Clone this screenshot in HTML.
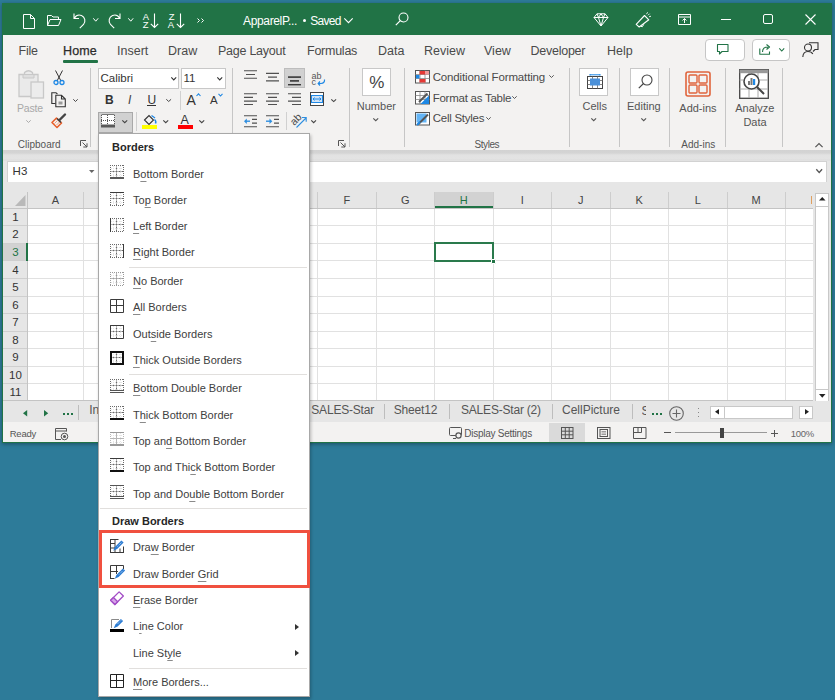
<!DOCTYPE html>
<html><head><meta charset="utf-8">
<style>
*{margin:0;padding:0;box-sizing:border-box}
html,body{width:835px;height:700px;overflow:hidden;background:#2d7b99;font-family:"Liberation Sans",sans-serif;position:relative}
.a{position:absolute}
.t{position:absolute;white-space:nowrap;line-height:1}
svg{position:absolute;overflow:visible}
.w{color:#fff}
.tab{position:absolute;white-space:nowrap;line-height:1;font-size:12.5px;color:#444}
.g{position:absolute;white-space:nowrap;line-height:1;font-size:10px;color:#555}
.rl{position:absolute;white-space:nowrap;line-height:1;font-size:11px;color:#444}
.vs{position:absolute;width:1px;background:#c4c4c4}
.ch{position:absolute;white-space:nowrap;line-height:1;font-size:11px;color:#444;text-align:center}
#menu{left:98px;top:133px;width:212px;height:564px;background:#fff;border:1px solid #a8a8a8;box-shadow:1px 2px 3px rgba(0,0,0,.25)}
.mi u{text-decoration:underline;text-underline-offset:2.5px;text-decoration-thickness:1px;text-decoration-color:#8a8a8a}
.mi{position:absolute;left:34px;font-size:11px;color:#404040;white-space:nowrap;line-height:1}
.mh{position:absolute;left:13px;font-size:11px;font-weight:bold;color:#262626;white-space:nowrap;line-height:1}
.sep{position:absolute;right:2px;height:1px;background:#e1dfdd}
.ic{position:absolute;left:11px}
</style></head>
<body>
<!-- window -->
<div class="a" style="left:2px;top:3px;width:830px;height:440px;background:#217346;box-shadow:0 1px 4px rgba(0,0,0,.35)"></div>
<svg style="left:23px;top:14px" width="12" height="15" viewBox="0 0 12 15"><path d="M.5 .5H7.5L11.5 4.5V14.5H.5Z M7.5 .5V4.5H11.5" fill="none" stroke="#fff" stroke-width="1"/></svg>
<svg style="left:46px;top:14px" width="16" height="13" viewBox="0 0 16 13"><path d="M1.5 11.5V1.5H5.5L7 3H12.5V5.5 M1.5 11.5L4 5.5H15L12.5 11.5Z" fill="none" stroke="#fff" stroke-width="1" stroke-linejoin="round"/></svg>
<svg style="left:72px;top:11.8px" width="15" height="17" viewBox="0 0 15 17"><path d="M2 1.5V6.5H7 M2.5 6C4 3.5 7 2.5 9.5 3.5C13 5 14 9.5 11.5 12.5L7.8 16.2" fill="none" stroke="#fff" stroke-width="1.1"/></svg>
<svg style="left:92.5px;top:18px" width="5.5" height="3.5" viewBox="0 0 5.5 3.5"><path d="M0.3 0.3L2.75 3.2L5.2 0.3" fill="none" stroke="#fff" stroke-width="1"/></svg>
<svg style="left:107.3px;top:11.8px" width="15" height="17" viewBox="0 0 15 17"><path d="M13 1.5V6.5H8 M12.5 6C11 3.5 8 2.5 5.5 3.5C2 5 1 9.5 3.5 12.5L7.2 16.2" fill="none" stroke="#fff" stroke-width="1.1"/></svg>
<svg style="left:127.8px;top:18px" width="5.5" height="3.5" viewBox="0 0 5.5 3.5"><path d="M0.3 0.3L2.75 3.2L5.2 0.3" fill="none" stroke="#fff" stroke-width="1"/></svg>
<div class="t" style="left:142.6px;top:13.0px;font-size:8.6px;color:#fff;transform:scaleX(1.1)">A</div>
<div class="t" style="left:143.0px;top:21.4px;font-size:8.6px;color:#fff;transform:scaleX(1.1)">Z</div>
<svg style="left:150px;top:13px" width="9" height="16" viewBox="0 0 9 16"><path d="M4.5 0.5V14.5M0.8 10.8L4.5 14.5L8.2 10.8" fill="none" stroke="#fff" stroke-width="1.1"/></svg>
<div class="t" style="left:168.6px;top:13.0px;font-size:8.6px;color:#fff;transform:scaleX(1.1)">Z</div>
<div class="t" style="left:168.4px;top:21.4px;font-size:8.6px;color:#fff;transform:scaleX(1.1)">A</div>
<svg style="left:175.5px;top:13px" width="9" height="16" viewBox="0 0 9 16"><path d="M4.5 0.5V14.5M0.8 10.8L4.5 14.5L8.2 10.8" fill="none" stroke="#fff" stroke-width="1.1"/></svg>
<svg style="left:197px;top:18px" width="8" height="5" viewBox="0 0 8 5"><path d="M.5 .5L2.5 2.5L.5 4.5M4.5 .5L6.5 2.5L4.5 4.5" fill="none" stroke="#fff" stroke-width="1"/></svg>
<div class="t" style="left:243.0px;top:15.3px;font-size:12px;color:#fff;letter-spacing:-0.35px">ApparelP...</div>
<div class="a" style="left:302.5px;top:19px;width:3px;height:3px;background:#fff;border-radius:50%"></div>
<div class="t" style="left:310.2px;top:15.3px;font-size:12px;color:#fff;letter-spacing:-0.7px">Saved</div>
<svg style="left:344px;top:18px" width="9" height="5" viewBox="0 0 9 5"><path d="M0.3 0.3L4.5 4.7L8.7 0.3" fill="none" stroke="#fff" stroke-width="1.1"/></svg>
<svg style="left:395px;top:12px" width="14" height="14" viewBox="0 0 14 14"><circle cx="8.5" cy="5.5" r="4.5" fill="none" stroke="#fff" stroke-width="1.1"/><path d="M5.3 8.7L0.8 13.2" stroke="#fff" stroke-width="1.2"/></svg>
<svg style="left:593px;top:13px" width="16" height="14" viewBox="0 0 16 14"><path d="M4 .8H12L15 4.5L8 13L1 4.5Z M1 4.5H15 M5.5 4.5L8 13L10.5 4.5 M4 .8L5.5 4.5L8 .8L10.5 4.5L12 .8" fill="none" stroke="#fff" stroke-width="1" stroke-linejoin="round"/></svg>
<svg style="left:635px;top:12px" width="17" height="16" viewBox="0 0 17 16"><path d="M1.2 12.3L9.5 3.5L13.8 7.8L4.2 15Z" fill="none" stroke="#fff" stroke-width="1.1" stroke-linejoin="round"/><path d="M5.5 14.2Q7.5 16.2 8.8 12.3" fill="none" stroke="#fff" stroke-width="1"/><path d="M11.5 2.2L12.6 .3M14 4.8L16 4.2M13 3.3L14.6 1.7" stroke="#fff" stroke-width="0.9"/></svg>
<svg style="left:677.5px;top:14px" width="13" height="11" viewBox="0 0 13 11"><path d="M.5 .5H12.5V10.5H.5Z M.5 3H12.5 M6.5 9V4.5 M4.5 6.5L6.5 4.5L8.5 6.5" fill="none" stroke="#fff" stroke-width="1"/></svg>
<div class="a" style="left:721px;top:19px;width:10px;height:1px;background:#fff"></div>
<svg style="left:763px;top:14px" width="10" height="10" viewBox="0 0 10 10"><rect x=".5" y=".5" width="9" height="9" rx="1.5" fill="none" stroke="#fff" stroke-width="1"/></svg>
<svg style="left:804.5px;top:14px" width="11" height="11" viewBox="0 0 11 11"><path d="M.5 .5L10.5 10.5M10.5 .5L.5 10.5" stroke="#fff" stroke-width="1.1"/></svg>
<div class="a" style="left:3px;top:35px;width:828px;height:115px;background:#f3f2f1"></div>
<div class="t" style="left:18.5px;top:44.6px;font-size:12.5px;color:#4a4a4a;letter-spacing:-0.25px">File</div>
<div class="t" style="left:117.0px;top:44.6px;font-size:12.5px;color:#4a4a4a">Insert</div>
<div class="t" style="left:168.0px;top:44.6px;font-size:12.5px;color:#4a4a4a">Draw</div>
<div class="t" style="left:218.0px;top:44.6px;font-size:12.5px;color:#4a4a4a;letter-spacing:-0.25px">Page Layout</div>
<div class="t" style="left:307.0px;top:44.6px;font-size:12.5px;color:#4a4a4a;letter-spacing:-0.25px">Formulas</div>
<div class="t" style="left:378.0px;top:44.6px;font-size:12.5px;color:#4a4a4a">Data</div>
<div class="t" style="left:424.0px;top:44.6px;font-size:12.5px;color:#4a4a4a">Review</div>
<div class="t" style="left:484.0px;top:44.6px;font-size:12.5px;color:#4a4a4a">View</div>
<div class="t" style="left:530.5px;top:44.6px;font-size:12.5px;color:#4a4a4a;letter-spacing:-0.25px">Developer</div>
<div class="t" style="left:607.0px;top:44.6px;font-size:12.5px;color:#4a4a4a">Help</div>
<div class="t" style="left:63.0px;top:44.6px;font-size:12.5px;color:#2b2b2b;letter-spacing:0.1px;-webkit-text-stroke:0.25px #2b2b2b">Home</div>
<div class="a" style="left:63px;top:60px;width:35px;height:3px;background:#217346;border-radius:1px"></div>
<div class="a" style="left:704.5px;top:38.5px;width:40px;height:22px;border:1px solid #c6c6c6;border-radius:4px;background:#fff"></div>
<svg style="left:716.5px;top:43.5px" width="12" height="11" viewBox="0 0 12 11"><path d="M.5 .5H11V7.5H5L2.5 10V7.5H.5Z" fill="none" stroke="#217346" stroke-width="1.1" stroke-linejoin="round"/></svg>
<div class="a" style="left:752px;top:38.5px;width:37.5px;height:22px;border:1px solid #c6c6c6;border-radius:4px;background:#fff"></div>
<svg style="left:758.5px;top:43px" width="13" height="12" viewBox="0 0 13 12"><path d="M.8 5.5V11.2H10.5V8.5 M3.5 9C3.5 5.5 5.5 4 9 4 M7.5 1.5L10.5 4L7.5 6.5" fill="none" stroke="#217346" stroke-width="1.1" stroke-linejoin="round"/></svg>
<svg style="left:779px;top:47.5px" width="5.5" height="3.3" viewBox="0 0 5.5 3.3"><path d="M0.3 0.3L2.75 3.0L5.2 0.3" fill="none" stroke="#217346" stroke-width="1.1"/></svg>
<svg style="left:801.5px;top:42px" width="17" height="16" viewBox="0 0 17 16"><circle cx="6" cy="5.5" r="3.5" fill="none" stroke="#333" stroke-width="1.1"/><path d="M.8 15C1 11 3 9.5 6 9.5C8.5 9.5 10 10.5 10.8 12 M7 .8H16V7.5H13L11 9.5" fill="none" stroke="#333" stroke-width="1.1"/></svg>
<div class="a" style="left:90px;top:68px;width:1px;height:79px;background:#c6c6c6"></div>
<div class="a" style="left:232px;top:68px;width:1px;height:79px;background:#c6c6c6"></div>
<div class="a" style="left:349px;top:68px;width:1px;height:79px;background:#c6c6c6"></div>
<div class="a" style="left:404px;top:68px;width:1px;height:79px;background:#c6c6c6"></div>
<div class="a" style="left:569px;top:68px;width:1px;height:79px;background:#c6c6c6"></div>
<div class="a" style="left:619px;top:68px;width:1px;height:79px;background:#c6c6c6"></div>
<div class="a" style="left:669px;top:68px;width:1px;height:79px;background:#c6c6c6"></div>
<div class="a" style="left:725px;top:68px;width:1px;height:79px;background:#c6c6c6"></div>
<div class="a" style="left:782px;top:68px;width:1px;height:79px;background:#c6c6c6"></div>
<svg style="left:18px;top:70px" width="27" height="29" viewBox="0 0 27 29"><path d="M1 4.5H6.5V2.5Q10.5 -1 14.5 2.5V4.5H20V26.5H1Z" fill="#eaeaea" stroke="#c8c8c8" stroke-width="1.3"/><path d="M5 4.5H16V8H5Z" fill="#dedede" stroke="#c8c8c8" stroke-width="1"/><rect x="13" y="12" width="12.5" height="16" fill="#ececec" stroke="#c8c8c8" stroke-width="1.3"/></svg>
<div class="t" style="left:17.0px;top:103.3px;font-size:10.5px;color:#a8a8a8;letter-spacing:-0.2px">Paste</div>
<svg style="left:26.2px;top:119.8px" width="5" height="2.8" viewBox="0 0 5 2.8"><path d="M0.3 0.3L2.5 2.5L4.7 0.3" fill="none" stroke="#aaa" stroke-width="1"/></svg>
<svg style="left:53px;top:70px" width="12" height="16" viewBox="0 0 12 16"><path d="M2.5 .5L8 11M9.5 .5L4 11" stroke="#333" stroke-width="1"/><circle cx="3" cy="12.5" r="2" fill="none" stroke="#1e88e5" stroke-width="1.3"/><circle cx="9" cy="12.5" r="2" fill="none" stroke="#1e88e5" stroke-width="1.3"/></svg>
<svg style="left:51px;top:92px" width="16" height="16" viewBox="0 0 16 16"><path d="M4.5 11.5H.8V.8H5L6.5 2.2" fill="none" stroke="#333" stroke-width="1.1"/><path d="M4.8 3.3H10.5L14.3 7V14.7H4.8Z M10.5 3.3V7H14.3" fill="none" stroke="#333" stroke-width="1.1"/><rect x="7.5" y="9.5" width="4" height="3" fill="#9a9a9a"/></svg>
<svg style="left:72.5px;top:98.6px" width="5" height="2.8" viewBox="0 0 5 2.8"><path d="M0.3 0.3L2.5 2.5L4.7 0.3" fill="none" stroke="#444" stroke-width="1"/></svg>
<svg style="left:51px;top:113px" width="16" height="15" viewBox="0 0 16 15"><path d="M1 9.5L5.5 5L10.5 10L6 14.5Z" fill="#f3f2f1" stroke="#e8602c" stroke-width="1.6" stroke-linejoin="round"/><path d="M3.5 10.5L6.5 7.5M5.5 12L8.5 9" stroke="#f4a27e" stroke-width="1"/><path d="M6 5.5L10 9.5" stroke="#444" stroke-width="1.6"/><path d="M8.5 7L14 1.5" stroke="#444" stroke-width="2.4" stroke-linecap="round"/></svg>
<div class="t" style="left:17.8px;top:140.2px;font-size:10px;color:#555">Clipboard</div>
<svg style="left:79.5px;top:140px" width="8" height="8" viewBox="0 0 8 8"><path d="M.5 6V.5H6M2.5 2.5L7 7M7 3.3V7H3.3" fill="none" stroke="#555" stroke-width="1"/></svg>
<div class="a" style="left:98px;top:67.5px;width:80.5px;height:21px;background:#fff;border:1px solid #c8c8c8"></div>
<div class="t" style="left:100.5px;top:73.2px;font-size:11.5px;color:#333">Calibri</div>
<svg style="left:170.5px;top:77.3px" width="5.5" height="3.2" viewBox="0 0 5.5 3.2"><path d="M0.3 0.3L2.75 2.9000000000000004L5.2 0.3" fill="none" stroke="#333" stroke-width="1.1"/></svg>
<div class="a" style="left:180.5px;top:67.5px;width:45px;height:21px;background:#fff;border:1px solid #c8c8c8"></div>
<div class="t" style="left:183.5px;top:73.2px;font-size:11.5px;color:#333">11</div>
<svg style="left:217.2px;top:77.3px" width="5.5" height="3.2" viewBox="0 0 5.5 3.2"><path d="M0.3 0.3L2.75 2.9000000000000004L5.2 0.3" fill="none" stroke="#333" stroke-width="1.1"/></svg>
<div class="t" style="left:105.0px;top:93.5px;font-size:12px;color:#333;font-weight:bold">B</div>
<div class="t" style="left:128.0px;top:93.5px;font-size:12px;color:#444;font-style:italic">I</div>
<div class="t" style="left:147.5px;top:93.5px;font-size:12px;color:#333">U</div>
<div class="a" style="left:147px;top:105px;width:9px;height:1px;background:#333"></div>
<svg style="left:165.8px;top:98.8px" width="5.4" height="2.8" viewBox="0 0 5.4 2.8"><path d="M0.3 0.3L2.7 2.5L5.1000000000000005 0.3" fill="none" stroke="#444" stroke-width="1"/></svg>
<div class="a" style="left:180px;top:91px;width:1px;height:19px;background:#d0d0d0"></div>
<div class="t" style="left:186.5px;top:93.0px;font-size:14px;color:#333">A</div>
<svg style="left:196px;top:93px" width="5" height="3.5" viewBox="0 0 5 3.5"><path d="M.5 3L2.5 .8L4.5 3" fill="none" stroke="#1e88e5" stroke-width="1.1"/></svg>
<div class="t" style="left:210.0px;top:95.2px;font-size:11.5px;color:#333">A</div>
<svg style="left:218.4px;top:92.8px" width="5" height="3.5" viewBox="0 0 5 3.5"><path d="M.5 .8L2.5 3L4.5 .8" fill="none" stroke="#1e88e5" stroke-width="1.1"/></svg>
<div class="a" style="left:98px;top:111.5px;width:35px;height:21px;background:#d1d1d1;border:1px solid #a9a9a9"></div>
<svg style="left:101px;top:114px" width="14" height="14" viewBox="0 0 14 14"><rect x=".5" y=".5" width="13" height="12" fill="#fff"/><path d="M.5 .5H13.5" stroke="#777" stroke-width="1"/><path d="M.5 1V12M13.5 1V12M0 6.5H14M6.5 1V12" fill="none" stroke="#555" stroke-width="1" stroke-dasharray="1 1"/><path d="M0 12H14" stroke="#5a5a5a" stroke-width="3"/></svg>
<svg style="left:122px;top:120px" width="5.5" height="3" viewBox="0 0 5.5 3"><path d="M0.3 0.3L2.75 2.7L5.2 0.3" fill="none" stroke="#444" stroke-width="1.1"/></svg>
<div class="a" style="left:135.8px;top:112px;width:1px;height:19px;background:#d0d0d0"></div>
<svg style="left:143px;top:113.5px" width="14" height="12" viewBox="0 0 14 12"><path d="M1.5 6L6 1.5L10.5 6L6 10.5Z" fill="none" stroke="#333" stroke-width="1.1"/><path d="M11.5 5.5Q13.5 7 12.5 9.5" fill="none" stroke="#1e88e5" stroke-width="1.5"/><path d="M8.5 1.5L12 4" stroke="#1e88e5" stroke-width="1.2"/></svg>
<div class="a" style="left:142px;top:125px;width:15px;height:4px;background:#ffff00"></div>
<svg style="left:162.7px;top:119.8px" width="5.5" height="3" viewBox="0 0 5.5 3"><path d="M0.3 0.3L2.75 2.7L5.2 0.3" fill="none" stroke="#444" stroke-width="1.1"/></svg>
<div class="t" style="left:180.5px;top:114.1px;font-size:12.5px;color:#333">A</div>
<div class="a" style="left:178px;top:125px;width:15px;height:4px;background:#ff0000"></div>
<svg style="left:198.7px;top:119.8px" width="5.5" height="3" viewBox="0 0 5.5 3"><path d="M0.3 0.3L2.75 2.7L5.2 0.3" fill="none" stroke="#444" stroke-width="1.1"/></svg>
<div class="a" style="left:284.3px;top:67.9px;width:20.7px;height:20.5px;background:#d1d1d1;border:1px solid #bdbdbd"></div>
<svg style="left:0;top:0" width="835" height="700" viewBox="0 0 835 700"><path d="M244 70.8H257M246 74.5H255M244 78.3H257M266 73.4H279M268 77.1H277M266 80.9H279M288 77.1H301M290 80.9H299M288 84.6H301M244 93.7H257M244 97.4H253M244 101.1H257M244 104.5H253M266 93.7H279M268 97.4H277M266 101.1H279M268 104.5H277M288 93.7H301M292 97.4H301M288 101.1H301M292 104.5H301M244 115.7H257M252 119.4H257M252 123.1H257M244 126.8H257M266 115.7H279M274 119.4H279M274 123.1H279M266 126.8H279" stroke="#505050" stroke-width="1.1"/></svg>
<svg style="left:0;top:0" width="835" height="700" viewBox="0 0 835 700"><path d="M288 77.1H301M290 80.9H299M288 84.6H301" stroke="#3a3a3a" stroke-width="1.1"/></svg>
<div class="t" style="left:311.5px;top:71.6px;font-size:9px;color:#555">ab</div>
<div class="t" style="left:311.5px;top:78.1px;font-size:9px;color:#555">c</div>
<svg style="left:317px;top:79px" width="9" height="7" viewBox="0 0 9 7"><path d="M7.5 .5Q8 4 4 4.5H1.5M3 2.5L1.2 4.5L3 6.5" fill="none" stroke="#1e88e5" stroke-width="1.2"/></svg>
<svg style="left:244px;top:118px" width="7" height="6" viewBox="0 0 7 6"><path d="M6 3.2H1.5" stroke="#2f8fe0" stroke-width="1.4"/><path d="M0 3.2L2.8 .5V5.9Z" fill="#2f8fe0"/></svg>
<svg style="left:266px;top:118px" width="7" height="6" viewBox="0 0 7 6"><path d="M0 3.2H4.5" stroke="#2f8fe0" stroke-width="1.4"/><path d="M6.3 3.2L3.5 .5V5.9Z" fill="#2f8fe0"/></svg>
<svg style="left:309.8px;top:92.2px" width="14" height="14" viewBox="0 0 14 14"><rect x=".5" y=".5" width="13" height="13" fill="#fff" stroke="#444" stroke-width="1"/><rect x="1.5" y="3.5" width="11" height="7" fill="#cfe3f7" stroke="#1e88e5" stroke-width="1"/><path d="M3 7H11M4.5 5.5L3 7L4.5 8.5M9.5 5.5L11 7L9.5 8.5" fill="none" stroke="#1e88e5" stroke-width="1"/></svg>
<svg style="left:330.6px;top:98.6px" width="5.4" height="2.9" viewBox="0 0 5.4 2.9"><path d="M0.3 0.3L2.7 2.6L5.1000000000000005 0.3" fill="none" stroke="#444" stroke-width="1.1"/></svg>
<div class="a" style="left:286px;top:112px;width:1px;height:18px;background:#d0d0d0"></div>
<div class="t" style="left:291.8px;top:115.0px;font-size:10.5px;color:#4a4a4a;transform:rotate(-45deg);transform-origin:30% 70%">ab</div>
<svg style="left:296px;top:116px" width="11" height="12" viewBox="0 0 11 12"><path d="M.5 11.5L10 2M6 1.5H10.2V5.7" fill="none" stroke="#2f8fe0" stroke-width="1.1"/></svg>
<svg style="left:311.2px;top:120.2px" width="5.3" height="3" viewBox="0 0 5.3 3"><path d="M0.3 0.3L2.65 2.7L5.0 0.3" fill="none" stroke="#444" stroke-width="1.1"/></svg>
<svg style="left:338px;top:139.6px" width="8" height="8" viewBox="0 0 8 8"><path d="M.5 6V.5H6M2.5 2.5L7 7M7 3.3V7H3.3" fill="none" stroke="#555" stroke-width="1"/></svg>
<div class="a" style="left:362px;top:67.5px;width:29px;height:28px;background:#fff;border:1px solid #c8c8c8"></div>
<div class="t" style="left:369.2px;top:74.2px;font-size:17px;color:#444">%</div>
<div class="t" style="left:356.8px;top:101.1px;font-size:11px;color:#555">Number</div>
<svg style="left:373px;top:118px" width="5.5" height="3" viewBox="0 0 5.5 3"><path d="M0.3 0.3L2.75 2.7L5.2 0.3" fill="none" stroke="#555" stroke-width="1.1"/></svg>
<svg style="left:415px;top:69.5px" width="15" height="14" viewBox="0 0 15 14"><rect x=".5" y=".5" width="14" height="12.5" fill="#fff" stroke="#555"/><path d="M5 .5V13M10 .5V13M.5 4.5H14.5M.5 8.5H14.5" stroke="#888" stroke-width="0.8"/><rect x="4.5" y="1" width="6" height="3.5" fill="#e53935"/><rect x="4.5" y="9" width="6" height="3.5" fill="#e53935"/><rect x="1" y="5" width="3.5" height="3.5" fill="#1e88e5"/><rect x="10" y="1" width="4" height="3.5" fill="#ef9a9a"/></svg>
<div class="t" style="left:432.7px;top:71.7px;font-size:11.5px;color:#4a4a4a;letter-spacing:-0.15px">Conditional Formatting</div>
<svg style="left:549px;top:75.4px" width="5" height="2.8" viewBox="0 0 5 2.8"><path d="M0.3 0.3L2.5 2.5L4.7 0.3" fill="none" stroke="#555" stroke-width="1"/></svg>
<svg style="left:415px;top:90.5px" width="15" height="14" viewBox="0 0 15 14"><rect x=".5" y=".5" width="14" height="12.5" fill="#fff" stroke="#555"/><path d="M5 .5V13M10 .5V13M.5 4.5H14.5M.5 8.5H14.5" stroke="#888" stroke-width="0.8"/><path d="M5.5 13L14 4.5V13Z" fill="#1e88e5"/><path d="M4 11L12.5 2.5" stroke="#555" stroke-width="2"/></svg>
<div class="t" style="left:432.7px;top:92.5px;font-size:11.5px;color:#4a4a4a;letter-spacing:-0.25px">Format as Table</div>
<svg style="left:512.3px;top:96.3px" width="5" height="2.8" viewBox="0 0 5 2.8"><path d="M0.3 0.3L2.5 2.5L4.7 0.3" fill="none" stroke="#555" stroke-width="1"/></svg>
<svg style="left:415px;top:111.5px" width="15" height="14" viewBox="0 0 15 14"><rect x=".5" y=".5" width="14" height="12.5" fill="#fff" stroke="#555"/><rect x="1.5" y="1.5" width="10" height="9" fill="#64b5f6"/><path d="M3 12.5L13 2.5" stroke="#555" stroke-width="2"/><path d="M2 13L5 10" stroke="#1e88e5" stroke-width="2"/></svg>
<div class="t" style="left:432.7px;top:113.4px;font-size:11.5px;color:#4a4a4a;letter-spacing:-0.25px">Cell Styles</div>
<svg style="left:485.8px;top:117px" width="5" height="2.8" viewBox="0 0 5 2.8"><path d="M0.3 0.3L2.5 2.5L4.7 0.3" fill="none" stroke="#555" stroke-width="1"/></svg>
<div class="t" style="left:474.4px;top:140.2px;font-size:10px;color:#555;letter-spacing:-0.4px">Styles</div>
<div class="a" style="left:579.4px;top:67.5px;width:29px;height:28px;background:#fff;border:1px solid #c8c8c8"></div>
<svg style="left:586.5px;top:74px" width="16" height="15" viewBox="0 0 16 15"><rect x=".5" y="2.5" width="15" height="12" fill="#fff" stroke="#444"/><path d="M5.5 2.5V14.5M10.5 2.5V14.5M.5 6.5H15.5M.5 10.5H15.5" stroke="#666" stroke-width="0.8"/><rect x="3" y="4.5" width="10" height="7" fill="#4a90d9"/><path d="M3 .8H13M3 0V1.6M13 0V1.6" stroke="#1e88e5" stroke-width="1"/></svg>
<div class="t" style="left:582.5px;top:100.8px;font-size:11px;color:#555">Cells</div>
<svg style="left:591.2px;top:118px" width="5.4" height="3" viewBox="0 0 5.4 3"><path d="M0.3 0.3L2.7 2.7L5.1000000000000005 0.3" fill="none" stroke="#555" stroke-width="1.1"/></svg>
<div class="a" style="left:629.7px;top:67.5px;width:29.5px;height:28px;background:#fff;border:1px solid #c8c8c8"></div>
<svg style="left:637.5px;top:74px" width="15" height="15" viewBox="0 0 15 15"><circle cx="9" cy="6" r="5" fill="none" stroke="#444" stroke-width="1.1"/><path d="M5.5 9.5L.8 14.2" stroke="#444" stroke-width="1.2"/></svg>
<div class="t" style="left:627.0px;top:101.1px;font-size:11px;color:#555">Editing</div>
<svg style="left:641.2px;top:118px" width="5.4" height="3" viewBox="0 0 5.4 3"><path d="M0.3 0.3L2.7 2.7L5.1000000000000005 0.3" fill="none" stroke="#555" stroke-width="1.1"/></svg>
<svg style="left:685px;top:70.5px" width="26" height="26" viewBox="0 0 26 26"><rect x="1" y="1" width="24" height="24" rx="2" fill="none" stroke="#e0643c" stroke-width="1.6"/><rect x="4" y="4" width="8" height="8" rx="1" fill="none" stroke="#e0643c" stroke-width="1.4"/><rect x="14" y="4" width="8" height="8" rx="1" fill="none" stroke="#e0643c" stroke-width="1.4"/><rect x="4" y="14" width="8" height="8" rx="1" fill="none" stroke="#e0643c" stroke-width="1.4"/><rect x="14" y="14" width="8" height="8" rx="1" fill="none" stroke="#e0643c" stroke-width="1.4"/></svg>
<div class="t" style="left:679.3px;top:102.7px;font-size:11px;color:#555">Add-ins</div>
<div class="t" style="left:681.3px;top:140.2px;font-size:10px;color:#555">Add-ins</div>
<svg style="left:739px;top:69px" width="30" height="30" viewBox="0 0 30 30"><rect x=".7" y=".7" width="28.6" height="28.6" fill="#fff" stroke="#444" stroke-width="1.3"/><rect x=".7" y=".7" width="28.6" height="3.5" fill="#999"/><path d="M.7 11H29M.7 20H29M10 4V29M19 4V29" stroke="#aaa" stroke-width="1"/><circle cx="12.5" cy="12.5" r="7.5" fill="#fff" stroke="#444" stroke-width="1.6"/><path d="M18 18L25 25" stroke="#444" stroke-width="2"/><rect x="9" y="12" width="2" height="4" fill="#777"/><rect x="11.5" y="9" width="2" height="7" fill="#777"/><rect x="14" y="10" width="2.2" height="6" fill="#1e88e5"/></svg>
<div class="t" style="left:735.2px;top:102.7px;font-size:11px;color:#555">Analyze</div>
<div class="t" style="left:743.4px;top:116.9px;font-size:11px;color:#555">Data</div>
<svg style="left:814.6px;top:143px" width="8" height="4.5" viewBox="0 0 8 4.5"><path d="M.4 4.2L4 .6L7.6 4.2" fill="none" stroke="#555" stroke-width="1.2"/></svg>
<div class="a" style="left:3px;top:150px;width:828px;height:12px;background:linear-gradient(#d2d2d2 0,#d4d4d4 3px,#e2e2e2 5px,#e3e3e3 9px,#dcdcdc 10px,#e6e6e6 11px)"></div>
<div class="a" style="left:3px;top:162px;width:828px;height:30px;background:#e6e6e6"></div>
<div class="a" style="left:7px;top:161px;width:93px;height:22px;background:#fff;border:1px solid #d2d2d2;border-right:none"></div>
<div class="t" style="left:12.6px;top:166.0px;font-size:11.5px;color:#333">H3</div>
<svg style="left:88.7px;top:169.8px" width="6" height="3.2" viewBox="0 0 6 3.2"><path d="M0 0H5.5L2.75 3Z" fill="#666"/></svg>
<div class="a" style="left:98px;top:161px;width:729px;height:22px;background:#fff;border:1px solid #d2d2d2;border-left:none"></div>
<svg style="left:815.7px;top:169.2px" width="6.4" height="3.8" viewBox="0 0 6.4 3.8"><path d="M0.3 0.3L3.2 3.5L6.1000000000000005 0.3" fill="none" stroke="#555" stroke-width="1.3"/></svg>
<div class="a" style="left:3px;top:182px;width:828px;height:219px;background:#e6e6e6"></div>
<div class="a" style="left:3px;top:192px;width:810px;height:16px;background:#e6e6e6"></div>
<svg style="left:14.5px;top:194.5px" width="11" height="11" viewBox="0 0 11 11"><path d="M10.5 0V11H0Z" fill="#b9b9b9"/></svg>
<div class="a" style="left:434.5px;top:192px;width:58.5px;height:16px;background:#d2d2d2"></div>
<div class="a" style="left:434.5px;top:206.3px;width:58.5px;height:1.7px;background:#217346"></div>
<div class="a" style="left:28px;top:208px;width:785px;height:193px;background:#fff"></div>
<div class="a" style="left:3px;top:208px;width:25px;height:193px;background:#e6e6e6"></div>
<div class="a" style="left:3px;top:243px;width:24px;height:18px;background:#d2d2d2"></div>
<div class="a" style="left:3px;top:207.8px;width:810px;height:1px;background:#c4c4c4"></div>
<div class="a" style="left:27px;top:192px;width:1px;height:209px;background:#c4c4c4"></div>
<div class="a" style="left:83.0px;top:192px;width:1px;height:16px;background:#cdcdcd"></div>
<div class="a" style="left:83.0px;top:209px;width:1px;height:192px;background:#e1e1e1"></div>
<div class="t" style="left:40.5px;width:30px;text-align:center;top:195.1px;font-size:11px;color:#444">A</div>
<div class="a" style="left:141.5px;top:192px;width:1px;height:16px;background:#cdcdcd"></div>
<div class="a" style="left:141.5px;top:209px;width:1px;height:192px;background:#e1e1e1"></div>
<div class="t" style="left:97.8px;width:30px;text-align:center;top:195.1px;font-size:11px;color:#444">B</div>
<div class="a" style="left:200.0px;top:192px;width:1px;height:16px;background:#cdcdcd"></div>
<div class="a" style="left:200.0px;top:209px;width:1px;height:192px;background:#e1e1e1"></div>
<div class="t" style="left:156.2px;width:30px;text-align:center;top:195.1px;font-size:11px;color:#444">C</div>
<div class="a" style="left:258.5px;top:192px;width:1px;height:16px;background:#cdcdcd"></div>
<div class="a" style="left:258.5px;top:209px;width:1px;height:192px;background:#e1e1e1"></div>
<div class="t" style="left:214.8px;width:30px;text-align:center;top:195.1px;font-size:11px;color:#444">D</div>
<div class="a" style="left:317.0px;top:192px;width:1px;height:16px;background:#cdcdcd"></div>
<div class="a" style="left:317.0px;top:209px;width:1px;height:192px;background:#e1e1e1"></div>
<div class="t" style="left:273.2px;width:30px;text-align:center;top:195.1px;font-size:11px;color:#444">E</div>
<div class="a" style="left:375.5px;top:192px;width:1px;height:16px;background:#cdcdcd"></div>
<div class="a" style="left:375.5px;top:209px;width:1px;height:192px;background:#e1e1e1"></div>
<div class="t" style="left:331.8px;width:30px;text-align:center;top:195.1px;font-size:11px;color:#444">F</div>
<div class="a" style="left:434.0px;top:192px;width:1px;height:16px;background:#cdcdcd"></div>
<div class="a" style="left:434.0px;top:209px;width:1px;height:192px;background:#e1e1e1"></div>
<div class="t" style="left:390.2px;width:30px;text-align:center;top:195.1px;font-size:11px;color:#444">G</div>
<div class="a" style="left:492.5px;top:192px;width:1px;height:16px;background:#cdcdcd"></div>
<div class="a" style="left:492.5px;top:209px;width:1px;height:192px;background:#e1e1e1"></div>
<div class="t" style="left:448.8px;width:30px;text-align:center;top:195.1px;font-size:11px;color:#217346">H</div>
<div class="a" style="left:551.0px;top:192px;width:1px;height:16px;background:#cdcdcd"></div>
<div class="a" style="left:551.0px;top:209px;width:1px;height:192px;background:#e1e1e1"></div>
<div class="t" style="left:507.2px;width:30px;text-align:center;top:195.1px;font-size:11px;color:#444">I</div>
<div class="a" style="left:609.5px;top:192px;width:1px;height:16px;background:#cdcdcd"></div>
<div class="a" style="left:609.5px;top:209px;width:1px;height:192px;background:#e1e1e1"></div>
<div class="t" style="left:565.8px;width:30px;text-align:center;top:195.1px;font-size:11px;color:#444">J</div>
<div class="a" style="left:668.0px;top:192px;width:1px;height:16px;background:#cdcdcd"></div>
<div class="a" style="left:668.0px;top:209px;width:1px;height:192px;background:#e1e1e1"></div>
<div class="t" style="left:624.2px;width:30px;text-align:center;top:195.1px;font-size:11px;color:#444">K</div>
<div class="a" style="left:726.5px;top:192px;width:1px;height:16px;background:#cdcdcd"></div>
<div class="a" style="left:726.5px;top:209px;width:1px;height:192px;background:#e1e1e1"></div>
<div class="t" style="left:682.8px;width:30px;text-align:center;top:195.1px;font-size:11px;color:#444">L</div>
<div class="a" style="left:785.0px;top:192px;width:1px;height:16px;background:#cdcdcd"></div>
<div class="a" style="left:785.0px;top:209px;width:1px;height:192px;background:#e1e1e1"></div>
<div class="t" style="left:741.2px;width:30px;text-align:center;top:195.1px;font-size:11px;color:#444">M</div>
<div class="a" style="left:811px;top:196px;width:1px;height:8px;background:#e0a060"></div>
<div class="a" style="left:3px;top:225.3px;width:24px;height:1px;background:#cfcfcf"></div>
<div class="a" style="left:28px;top:225.3px;width:785px;height:1px;background:#e1e1e1"></div>
<div class="t" style="left:3px;width:25px;text-align:center;top:211.9px;font-size:11.5px;color:#333">1</div>
<div class="a" style="left:3px;top:242.9px;width:24px;height:1px;background:#cfcfcf"></div>
<div class="a" style="left:28px;top:242.9px;width:785px;height:1px;background:#e1e1e1"></div>
<div class="t" style="left:3px;width:25px;text-align:center;top:229.4px;font-size:11.5px;color:#333">2</div>
<div class="a" style="left:3px;top:260.4px;width:24px;height:1px;background:#cfcfcf"></div>
<div class="a" style="left:28px;top:260.4px;width:785px;height:1px;background:#e1e1e1"></div>
<div class="t" style="left:3px;width:25px;text-align:center;top:246.9px;font-size:11.5px;color:#217346">3</div>
<div class="a" style="left:3px;top:277.9px;width:24px;height:1px;background:#cfcfcf"></div>
<div class="a" style="left:28px;top:277.9px;width:785px;height:1px;background:#e1e1e1"></div>
<div class="t" style="left:3px;width:25px;text-align:center;top:264.5px;font-size:11.5px;color:#333">4</div>
<div class="a" style="left:3px;top:295.5px;width:24px;height:1px;background:#cfcfcf"></div>
<div class="a" style="left:28px;top:295.5px;width:785px;height:1px;background:#e1e1e1"></div>
<div class="t" style="left:3px;width:25px;text-align:center;top:282.0px;font-size:11.5px;color:#333">5</div>
<div class="a" style="left:3px;top:313.0px;width:24px;height:1px;background:#cfcfcf"></div>
<div class="a" style="left:28px;top:313.0px;width:785px;height:1px;background:#e1e1e1"></div>
<div class="t" style="left:3px;width:25px;text-align:center;top:299.5px;font-size:11.5px;color:#333">6</div>
<div class="a" style="left:3px;top:330.5px;width:24px;height:1px;background:#cfcfcf"></div>
<div class="a" style="left:28px;top:330.5px;width:785px;height:1px;background:#e1e1e1"></div>
<div class="t" style="left:3px;width:25px;text-align:center;top:317.0px;font-size:11.5px;color:#333">7</div>
<div class="a" style="left:3px;top:348.0px;width:24px;height:1px;background:#cfcfcf"></div>
<div class="a" style="left:28px;top:348.0px;width:785px;height:1px;background:#e1e1e1"></div>
<div class="t" style="left:3px;width:25px;text-align:center;top:334.6px;font-size:11.5px;color:#333">8</div>
<div class="a" style="left:3px;top:365.6px;width:24px;height:1px;background:#cfcfcf"></div>
<div class="a" style="left:28px;top:365.6px;width:785px;height:1px;background:#e1e1e1"></div>
<div class="t" style="left:3px;width:25px;text-align:center;top:352.1px;font-size:11.5px;color:#333">9</div>
<div class="a" style="left:3px;top:383.1px;width:24px;height:1px;background:#cfcfcf"></div>
<div class="a" style="left:28px;top:383.1px;width:785px;height:1px;background:#e1e1e1"></div>
<div class="t" style="left:3px;width:25px;text-align:center;top:369.6px;font-size:11.5px;color:#333">10</div>
<div class="a" style="left:3px;top:400.6px;width:24px;height:1px;background:#cfcfcf"></div>
<div class="a" style="left:28px;top:400.6px;width:785px;height:1px;background:#e1e1e1"></div>
<div class="t" style="left:3px;width:25px;text-align:center;top:387.2px;font-size:11.5px;color:#333">11</div>
<div class="a" style="left:26px;top:243px;width:2px;height:18px;background:#217346"></div>
<div class="a" style="left:3px;top:400px;width:810px;height:1px;background:#c4c4c4"></div>
<div class="a" style="left:433.5px;top:242px;width:60.5px;height:20px;border:2px solid #2a7a4c"></div>
<div class="a" style="left:490.5px;top:258.5px;width:5px;height:5px;background:#217346;border:1px solid #fff;border-radius:1px"></div>
<div class="a" style="left:815px;top:193px;width:14px;height:209px;background:#fff;border:1px solid #c8c8c8"></div>
<div class="a" style="left:815px;top:193px;width:14px;height:14px;background:#fff;border:1px solid #c8c8c8"></div>
<svg style="left:818.7px;top:197px" width="6.5" height="3.5" viewBox="0 0 6.5 3.5"><path d="M0 3.5L3.25 0L6.5 3.5Z" fill="#222"/></svg>
<div class="a" style="left:815px;top:388.5px;width:14px;height:13px;background:#fff;border:1px solid #c8c8c8"></div>
<svg style="left:818.7px;top:394px" width="6.5" height="3.8" viewBox="0 0 6.5 3.8"><path d="M0 0L3.25 3.8L6.5 0Z" fill="#222"/></svg>
<div class="a" style="left:3px;top:401px;width:828px;height:21px;background:#e6e6e6"></div>
<div class="a" style="left:3px;top:421.5px;width:828px;height:1px;background:#d6d6d6"></div>
<svg style="left:23.4px;top:409.5px" width="4.5" height="6.5" viewBox="0 0 4.5 6.5"><path d="M4.2 0V6.5L0 3.25Z" fill="#217346"/></svg>
<svg style="left:44.3px;top:409.5px" width="4.5" height="6.5" viewBox="0 0 4.5 6.5"><path d="M0 0V6.5L4.2 3.25Z" fill="#217346"/></svg>
<div class="a" style="left:63px;top:413px;width:2px;height:2px;background:#217346"></div>
<div class="a" style="left:67px;top:413px;width:2px;height:2px;background:#217346"></div>
<div class="a" style="left:71px;top:413px;width:2px;height:2px;background:#217346"></div>
<div class="a" style="left:78px;top:404.5px;width:1px;height:15px;background:#bdbdbd"></div>
<div class="t" style="left:89.2px;top:404.0px;font-size:12px;color:#555">In</div>
<div class="t" style="left:311.3px;top:404.0px;font-size:12px;color:#555;letter-spacing:-0.2px">SALES-Star</div>
<div class="a" style="left:384px;top:404px;width:1px;height:15px;background:#bdbdbd"></div>
<div class="t" style="left:393.8px;top:404.0px;font-size:12px;color:#555;letter-spacing:-0.2px">Sheet12</div>
<div class="a" style="left:449px;top:404px;width:1px;height:15px;background:#bdbdbd"></div>
<div class="t" style="left:461.0px;top:404.0px;font-size:12px;color:#555;letter-spacing:-0.2px">SALES-Star (2)</div>
<div class="a" style="left:551.5px;top:404px;width:1px;height:15px;background:#bdbdbd"></div>
<div class="t" style="left:562.0px;top:404.0px;font-size:12px;color:#555">CellPicture</div>
<div class="a" style="left:632px;top:404px;width:1px;height:15px;background:#bdbdbd"></div>
<div class="a" style="left:641.5px;top:404px;width:4.5px;height:13px;overflow:hidden"><div class="t" style="left:0.0px;top:1.0px;font-size:12px;color:#555">S</div></div>
<div class="a" style="left:651.5px;top:413px;width:2px;height:2px;background:#217346"></div>
<div class="a" style="left:655.5px;top:413px;width:2px;height:2px;background:#217346"></div>
<div class="a" style="left:659.5px;top:413px;width:2px;height:2px;background:#217346"></div>
<svg style="left:669px;top:405.5px" width="15" height="15" viewBox="0 0 15 15"><circle cx="7.5" cy="7.5" r="6.8" fill="none" stroke="#666" stroke-width="1.1"/><path d="M7.5 3.5V11.5M3.5 7.5H11.5" stroke="#666" stroke-width="1.1"/></svg>
<div class="a" style="left:697.5px;top:407.5px;width:1.5px;height:1.5px;background:#888"></div>
<div class="a" style="left:697.5px;top:411.5px;width:1.5px;height:1.5px;background:#888"></div>
<div class="a" style="left:697.5px;top:415.5px;width:1.5px;height:1.5px;background:#888"></div>
<div class="a" style="left:710px;top:405.5px;width:83px;height:13.5px;background:#fff;border:1px solid #c8c8c8"></div>
<div class="a" style="left:710px;top:405.5px;width:15px;height:13.5px;background:#fff;border:1px solid #c8c8c8"></div>
<svg style="left:714.5px;top:409.3px" width="4" height="5.5" viewBox="0 0 4 5.5"><path d="M4 0V5.5L0 2.75Z" fill="#222"/></svg>
<div class="a" style="left:799px;top:405.5px;width:14px;height:13.5px;background:#fff;border:1px solid #c8c8c8"></div>
<svg style="left:804.8px;top:409.3px" width="4" height="5.5" viewBox="0 0 4 5.5"><path d="M0 0V5.5L4 2.75Z" fill="#222"/></svg>
<div class="a" style="left:3px;top:422px;width:828px;height:20px;background:#f3f2f1"></div>
<div class="t" style="left:9.7px;top:429.0px;font-size:9.5px;color:#555;letter-spacing:-0.2px">Ready</div>
<svg style="left:54.5px;top:427.5px" width="14" height="12" viewBox="0 0 14 12"><path d="M.5 .5H11.5V3.5M.5 .5V11.5H6M.5 3H11.5" fill="none" stroke="#555" stroke-width="1"/><circle cx="9.5" cy="8.5" r="3.3" fill="#f3f2f1" stroke="#555" stroke-width="1"/><circle cx="9.5" cy="8.5" r="1.5" fill="#555"/></svg>
<svg style="left:448.7px;top:426.7px" width="14" height="12" viewBox="0 0 14 12"><rect x=".5" y=".5" width="12" height="8" rx="1" fill="none" stroke="#555"/><circle cx="9.5" cy="8.5" r="2.6" fill="#f3f2f1" stroke="#555" stroke-width="1.2"/><path d="M4 11.5H7" stroke="#555"/></svg>
<div class="t" style="left:464.2px;top:429.2px;font-size:10px;color:#555;letter-spacing:-0.25px">Display Settings</div>
<div class="a" style="left:549px;top:423px;width:36px;height:19px;background:#dadada"></div>
<svg style="left:561px;top:426.5px" width="12.5" height="12" viewBox="0 0 12.5 12"><rect x=".5" y=".5" width="11.5" height="11" fill="none" stroke="#555"/><path d="M4.3 .5V11.5M8.2 .5V11.5M.5 4.2H12M.5 7.8H12" stroke="#555" stroke-width="1"/></svg>
<svg style="left:597px;top:426.5px" width="13.5" height="12" viewBox="0 0 13.5 12"><rect x=".5" y=".5" width="12.5" height="11" fill="none" stroke="#555"/><rect x="3" y="2.5" width="7.5" height="7" fill="none" stroke="#555"/><path d="M4.5 4.5H9M4.5 6H9M4.5 7.5H9" stroke="#777" stroke-width="0.7"/></svg>
<svg style="left:633px;top:426.5px" width="13.5" height="12" viewBox="0 0 13.5 12"><path d="M.5 .5H13V11.5H.5Z M5 .5V5.5H8.5V.5 M.5 5.5H5" fill="none" stroke="#555"/></svg>
<div class="a" style="left:663.5px;top:432px;width:7px;height:1px;background:#555"></div>
<div class="a" style="left:675px;top:432px;width:92px;height:1.2px;background:#999"></div>
<div class="a" style="left:719.5px;top:428px;width:4.5px;height:10px;background:#444"></div>
<svg style="left:771px;top:429.5px" width="7" height="7" viewBox="0 0 7 7"><path d="M3.5 0V7M0 3.5H7" stroke="#555" stroke-width="1"/></svg>
<div class="t" style="left:790.8px;top:428.5px;font-size:9.5px;color:#666;letter-spacing:-0.3px">100%</div>
<div id="menu" class="a">
<div class="mh" style="top:7.5px">Borders</div>
<div class="mi" style="top:34.7px">B<u>o</u>ttom Border</div>
<svg class="ic" width="14" height="14" viewBox="0 0 14 14" style="top:31.0px"><path d="M6.5 0V14M0 6.5H14" fill="none" stroke="#b5b5b5" stroke-width="1"/><path d="M3.5 1V13M10.5 1V13M1 3.5H13M1 10.5H13" fill="none" stroke="#e6e6e6" stroke-width="1" stroke-dasharray="1 1"/><path d="M6.5 0V14M0 6.5H14" fill="none" stroke="#6a6a6a" stroke-width="1" stroke-dasharray="1 2"/><path d="M.5 0V14M13.5 0V14M0 .5H14M0 13.5H14" fill="none" stroke="#6a6a6a" stroke-width="1" stroke-dasharray="1 1"/><path d="M0 13H14" stroke="#5a5a5a" stroke-width="2"/></svg>
<div class="mi" style="top:61.2px">To<u>p</u> Border</div>
<svg class="ic" width="14" height="14" viewBox="0 0 14 14" style="top:57.5px"><path d="M6.5 0V14M0 6.5H14" fill="none" stroke="#b5b5b5" stroke-width="1"/><path d="M3.5 1V13M10.5 1V13M1 3.5H13M1 10.5H13" fill="none" stroke="#e6e6e6" stroke-width="1" stroke-dasharray="1 1"/><path d="M6.5 0V14M0 6.5H14" fill="none" stroke="#6a6a6a" stroke-width="1" stroke-dasharray="1 2"/><path d="M.5 0V14M13.5 0V14M0 .5H14M0 13.5H14" fill="none" stroke="#6a6a6a" stroke-width="1" stroke-dasharray="1 1"/><path d="M0 .5H14" stroke="#3b3b3b"/></svg>
<div class="mi" style="top:87.3px"><u>L</u>eft Border</div>
<svg class="ic" width="14" height="14" viewBox="0 0 14 14" style="top:83.6px"><path d="M6.5 0V14M0 6.5H14" fill="none" stroke="#b5b5b5" stroke-width="1"/><path d="M3.5 1V13M10.5 1V13M1 3.5H13M1 10.5H13" fill="none" stroke="#e6e6e6" stroke-width="1" stroke-dasharray="1 1"/><path d="M6.5 0V14M0 6.5H14" fill="none" stroke="#6a6a6a" stroke-width="1" stroke-dasharray="1 2"/><path d="M.5 0V14M13.5 0V14M0 .5H14M0 13.5H14" fill="none" stroke="#6a6a6a" stroke-width="1" stroke-dasharray="1 1"/><path d="M.5 0V14" stroke="#3b3b3b"/></svg>
<div class="mi" style="top:113.3px"><u>R</u>ight Border</div>
<svg class="ic" width="14" height="14" viewBox="0 0 14 14" style="top:109.6px"><path d="M6.5 0V14M0 6.5H14" fill="none" stroke="#b5b5b5" stroke-width="1"/><path d="M3.5 1V13M10.5 1V13M1 3.5H13M1 10.5H13" fill="none" stroke="#e6e6e6" stroke-width="1" stroke-dasharray="1 1"/><path d="M6.5 0V14M0 6.5H14" fill="none" stroke="#6a6a6a" stroke-width="1" stroke-dasharray="1 2"/><path d="M.5 0V14M13.5 0V14M0 .5H14M0 13.5H14" fill="none" stroke="#6a6a6a" stroke-width="1" stroke-dasharray="1 1"/><path d="M13.5 0V14" stroke="#3b3b3b"/></svg>
<div class="sep" style="top:133.0px;left:30px"></div>
<div class="mi" style="top:141.7px"><u>N</u>o Border</div>
<svg class="ic" width="14" height="14" viewBox="0 0 14 14" style="top:138.0px"><path d="M6.5 0V14M0 6.5H14" fill="none" stroke="#b5b5b5" stroke-width="1"/><path d="M3.5 1V13M10.5 1V13M1 3.5H13M1 10.5H13" fill="none" stroke="#e6e6e6" stroke-width="1" stroke-dasharray="1 1"/><path d="M6.5 0V14M0 6.5H14" fill="none" stroke="#9a9a9a" stroke-width="1" stroke-dasharray="1 2"/><path d="M.5 0V14M13.5 0V14M0 .5H14M0 13.5H14" fill="none" stroke="#9a9a9a" stroke-width="1" stroke-dasharray="1 1"/></svg>
<div class="mi" style="top:168.2px"><u>A</u>ll Borders</div>
<svg class="ic" width="14" height="14" viewBox="0 0 14 14" style="top:164.5px"><path d="M.5 .5H13.5V13.5H.5ZM6.5 .5V13.5M.5 6.5H13.5" fill="none" stroke="#3b3b3b"/></svg>
<div class="mi" style="top:194.6px">Out<u>s</u>ide Borders</div>
<svg class="ic" width="14" height="14" viewBox="0 0 14 14" style="top:190.9px"><path d="M6.5 0V14M0 6.5H14" fill="none" stroke="#b5b5b5" stroke-width="1"/><path d="M3.5 1V13M10.5 1V13M1 3.5H13M1 10.5H13" fill="none" stroke="#e6e6e6" stroke-width="1" stroke-dasharray="1 1"/><path d="M6.5 0V14M0 6.5H14" fill="none" stroke="#6a6a6a" stroke-width="1" stroke-dasharray="1 2"/><path d="M.5 0V14M13.5 0V14M0 .5H14M0 13.5H14" fill="none" stroke="#6a6a6a" stroke-width="1" stroke-dasharray="1 1"/><path d="M.5 .5H13.5V13.5H.5Z" fill="none" stroke="#3b3b3b"/></svg>
<div class="mi" style="top:220.7px"><u>T</u>hick Outside Borders</div>
<svg class="ic" width="14" height="14" viewBox="0 0 14 14" style="top:217.0px"><path d="M6.5 0V14M0 6.5H14" fill="none" stroke="#b5b5b5" stroke-width="1"/><path d="M3.5 1V13M10.5 1V13M1 3.5H13M1 10.5H13" fill="none" stroke="#e6e6e6" stroke-width="1" stroke-dasharray="1 1"/><path d="M6.5 0V14M0 6.5H14" fill="none" stroke="#6a6a6a" stroke-width="1" stroke-dasharray="1 2"/><path d="M.5 0V14M13.5 0V14M0 .5H14M0 13.5H14" fill="none" stroke="#6a6a6a" stroke-width="1" stroke-dasharray="1 1"/><path d="M1 1H13V13H1Z" fill="none" stroke="#111" stroke-width="2"/></svg>
<div class="sep" style="top:240.0px;left:30px"></div>
<div class="mi" style="top:248.9px"><u>B</u>ottom Double Border</div>
<svg class="ic" width="14" height="14" viewBox="0 0 14 14" style="top:245.2px"><path d="M6.5 0V14M0 6.5H14" fill="none" stroke="#b5b5b5" stroke-width="1"/><path d="M3.5 1V13M10.5 1V13M1 3.5H13M1 10.5H13" fill="none" stroke="#e6e6e6" stroke-width="1" stroke-dasharray="1 1"/><path d="M6.5 0V14M0 6.5H14" fill="none" stroke="#6a6a6a" stroke-width="1" stroke-dasharray="1 2"/><path d="M.5 0V14M13.5 0V14M0 .5H14M0 13.5H14" fill="none" stroke="#6a6a6a" stroke-width="1" stroke-dasharray="1 1"/><rect x="-1" y="11" width="16" height="4" fill="#fff"/><path d="M0 11.5H14M0 13.5H14" stroke="#555"/></svg>
<div class="mi" style="top:275.6px">T<u>h</u>ick Bottom Border</div>
<svg class="ic" width="14" height="14" viewBox="0 0 14 14" style="top:271.9px"><path d="M6.5 0V14M0 6.5H14" fill="none" stroke="#b5b5b5" stroke-width="1"/><path d="M3.5 1V13M10.5 1V13M1 3.5H13M1 10.5H13" fill="none" stroke="#e6e6e6" stroke-width="1" stroke-dasharray="1 1"/><path d="M6.5 0V14M0 6.5H14" fill="none" stroke="#6a6a6a" stroke-width="1" stroke-dasharray="1 2"/><path d="M.5 0V14M13.5 0V14M0 .5H14M0 13.5H14" fill="none" stroke="#6a6a6a" stroke-width="1" stroke-dasharray="1 1"/><path d="M0 13H14" stroke="#111" stroke-width="2"/></svg>
<div class="mi" style="top:301.5px">Top an<u>d</u> Bottom Border</div>
<svg class="ic" width="14" height="14" viewBox="0 0 14 14" style="top:297.8px"><path d="M6.5 0V14M0 6.5H14" fill="none" stroke="#b5b5b5" stroke-width="1"/><path d="M3.5 1V13M10.5 1V13M1 3.5H13M1 10.5H13" fill="none" stroke="#e6e6e6" stroke-width="1" stroke-dasharray="1 1"/><path d="M6.5 0V14M0 6.5H14" fill="none" stroke="#b8b8b8" stroke-width="1" stroke-dasharray="1 2"/><path d="M.5 0V14M13.5 0V14M0 .5H14M0 13.5H14" fill="none" stroke="#b8b8b8" stroke-width="1" stroke-dasharray="1 1"/><path d="M0 .5H14" stroke="#999"/><path d="M0 13H14" stroke="#999" stroke-width="2"/></svg>
<div class="mi" style="top:328.0px">Top and Thi<u>c</u>k Bottom Border</div>
<svg class="ic" width="14" height="14" viewBox="0 0 14 14" style="top:324.3px"><path d="M6.5 0V14M0 6.5H14" fill="none" stroke="#b5b5b5" stroke-width="1"/><path d="M3.5 1V13M10.5 1V13M1 3.5H13M1 10.5H13" fill="none" stroke="#e6e6e6" stroke-width="1" stroke-dasharray="1 1"/><path d="M6.5 0V14M0 6.5H14" fill="none" stroke="#6a6a6a" stroke-width="1" stroke-dasharray="1 2"/><path d="M.5 0V14M13.5 0V14M0 .5H14M0 13.5H14" fill="none" stroke="#6a6a6a" stroke-width="1" stroke-dasharray="1 1"/><path d="M0 .5H14" stroke="#3b3b3b"/><path d="M0 13H14" stroke="#111" stroke-width="2"/></svg>
<div class="mi" style="top:354.5px">Top and Do<u>u</u>ble Bottom Border</div>
<svg class="ic" width="14" height="14" viewBox="0 0 14 14" style="top:350.8px"><path d="M6.5 0V14M0 6.5H14" fill="none" stroke="#b5b5b5" stroke-width="1"/><path d="M3.5 1V13M10.5 1V13M1 3.5H13M1 10.5H13" fill="none" stroke="#e6e6e6" stroke-width="1" stroke-dasharray="1 1"/><path d="M6.5 0V14M0 6.5H14" fill="none" stroke="#6a6a6a" stroke-width="1" stroke-dasharray="1 2"/><path d="M.5 0V14M13.5 0V14M0 .5H14M0 13.5H14" fill="none" stroke="#6a6a6a" stroke-width="1" stroke-dasharray="1 1"/><rect x="-1" y="11" width="16" height="4" fill="#fff"/><path d="M0 .5H14M0 11.5H14M0 13.5H14" stroke="#555"/></svg>
<div class="sep" style="top:373.9px;left:1px"></div>
<div class="mh" style="top:382.0px">Draw Borders</div>
<div class="mi" style="top:408.3px">Dra<u>w</u> Border</div>
<svg class="ic" width="14" height="14" viewBox="0 0 14 14" style="top:404.6px"><path d="M.5 .5V13.5H13.5V7.5M0 .5H8.5M.5 4.5H5M.5 9H6M5 .5V13.5M10 9.5V13.5M0 13.5H14" fill="none" stroke="#3b3b3b" stroke-width="1"/><path d="M3.2 11.8L4.9 7.9L11.4 1.4L13.6 3.6L7.1 10.1Z" fill="#2b7cd3"/><path d="M7.5 7.5L12 3" stroke="#fff" stroke-width=".7" stroke-dasharray="1 1"/></svg>
<div class="mi" style="top:434.9px">Draw Border <u>G</u>rid</div>
<svg class="ic" width="14" height="14" viewBox="0 0 14 14" style="top:431.2px"><path d="M.5 13.5V.5H13.5V4M0 13.5H4.5M6.5 .5V9M.5 6.5H8" fill="none" stroke="#3b3b3b" stroke-width="1"/><path d="M4.7 13.8L6.4 9.9L12.9 3.4L15.1 5.6L8.6 12.1Z" fill="#2b7cd3"/><path d="M9 9.5L13.5 5" stroke="#fff" stroke-width=".7" stroke-dasharray="1 1"/></svg>
<div class="mi" style="top:461.1px"><u>E</u>rase Border</div>
<svg class="ic" width="14" height="14" viewBox="0 0 14 14" style="top:457.4px"><path d="M13.36 5.08L9.12 .84L.64 9.32L4.88 13.56Z" fill="#fff" stroke="#a24bc6" stroke-width="1.3" stroke-linejoin="round"/><path d="M3.47 6.49L.64 9.32L4.88 13.56L7.71 10.73Z" fill="#d6a3e8" stroke="#a24bc6" stroke-width="1.3" stroke-linejoin="round"/></svg>
<div class="mi" style="top:487.3px">L<u>i</u>ne Color</div>
<svg class="ic" width="14" height="14" viewBox="0 0 14 14" style="top:483.6px"><path d="M9 1.5H1.5V10" fill="none" stroke="#8a8a8a" stroke-width="1"/><path d="M3.7 10.3L5.4 6.4L10.9 .9L13.1 3.1L7.6 8.6Z" fill="#2b7cd3"/><path d="M7.5 6L11.5 2" stroke="#fff" stroke-width=".7" stroke-dasharray="1 1"/><path d="M0 12.5H14" stroke="#000" stroke-width="3"/></svg>
<div class="mi" style="top:514.0px">Line St<u>y</u>le</div>
<div class="sep" style="top:533.5px;left:30px"></div>
<div class="mi" style="top:543.2px"><u>M</u>ore Borders...</div>
<svg class="ic" width="14" height="14" viewBox="0 0 14 14" style="top:539.5px"><path d="M.5 .5H13.5V13.5H.5ZM6.5 .5V13.5M.5 6.5H13.5" fill="none" stroke="#222"/></svg>
<div class="a" style="left:0;top:396px;width:211px;height:58px;border:3px solid #f0503f"></div>
<div class="a" style="left:196px;top:489.5px;width:0;height:0;border-left:4px solid #333;border-top:3.5px solid transparent;border-bottom:3.5px solid transparent"></div>
<div class="a" style="left:196px;top:516px;width:0;height:0;border-left:4px solid #333;border-top:3.5px solid transparent;border-bottom:3.5px solid transparent"></div>
</div>
</body></html>
